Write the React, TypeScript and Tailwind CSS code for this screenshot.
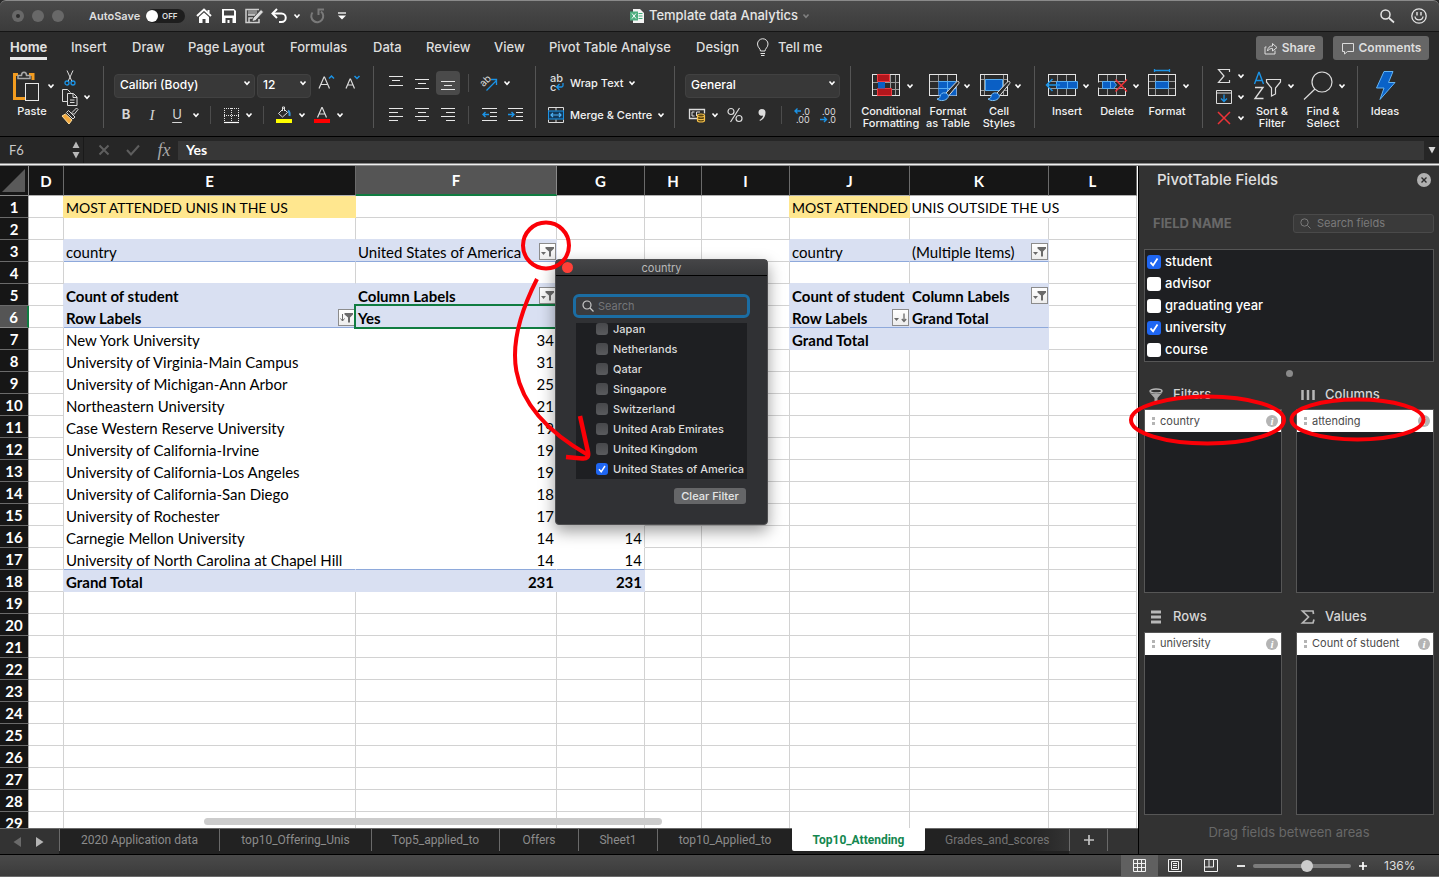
import React, { useState } from "react";

type Kids = { children?: React.ReactNode };

function Svg({ w, h, children }: { w: number; h: number } & Kids) {
  return (
    <svg width={w} height={h} viewBox={`0 0 ${w} ${h}`} fill="none" className="shrink-0 overflow-visible" aria-hidden="true">
      {children}
    </svg>
  );
}

function Chevron({ tone = "#ffffff" }: { tone?: string }) {
  return (
    <Svg w={8} h={8}>
      <path d="M1.5 2.5 4 5.2 6.5 2.5" stroke={tone} strokeWidth="1.6" />
    </Svg>
  );
}

function IconButton({ label, className, children }: { label: string; className: string } & Kids) {
  return (
    <button aria-label={label} className={`flex h-6 shrink-0 items-center justify-center rounded-sm ${className}`}>
      {children}
    </button>
  );
}

function Divider({ className }: { className: string }) {
  return <span className={`h-[18px] w-px shrink-0 bg-[#4c4c4c] ${className}`} />;
}

function Group({ className, children }: { className: string } & Kids) {
  return <div className={`h-[62px] shrink-0 border-r border-[#555555] ${className}`}>{children}</div>;
}

function BigButton({ label, className, chevron = true, children }: { label: string[]; className: string; chevron?: boolean } & Kids) {
  return (
    <button className={`flex shrink-0 flex-col items-center gap-1 ${className}`}>
      <span className={chevron ? "flex h-[30px] items-center gap-[5px] pl-[2px]" : "flex h-[30px] items-center"}>
        {children}
        {chevron && <Chevron />}
      </span>
      <span className="text-center text-[11px] leading-3 font-medium whitespace-nowrap">
        {label.map((l) => (
          <span key={l} className="block">
            {l}
          </span>
        ))}
      </span>
    </button>
  );
}

function RibbonSelect({ label, value, className }: { label: string; value: string; className: string }) {
  return (
    <div className={`relative h-6 shrink-0 ${className}`}>
      <select
        aria-label={label}
        className="h-6 w-full appearance-none rounded-sm border border-[#414141] bg-[#383838] px-[5px] pb-[2px] text-xs font-medium text-white"
      >
        <option>{value}</option>
      </select>
      <span className="pointer-events-none absolute top-2 right-1">
        <Chevron />
      </span>
    </div>
  );
}

function Lines({ rows }: { rows: [number, number, number][] }) {
  return (
    <Svg w={14} h={14}>
      {rows.map(([y, a, b]) => (
        <path key={y} d={`M${a} ${y + 0.5}H${b}`} stroke="#e6e6e6" />
      ))}
    </Svg>
  );
}

function GridBase({ cols, rows, x = 1, y = 5 }: { cols: number[]; rows: number[]; x?: number; y?: number }) {
  return (
    <g>
      {cols.map((c) => (
        <path key={`c${c}`} d={`M${c + 0.5} ${y}V${y + 21}`} stroke="#9a9a9a" />
      ))}
      {rows.map((r) => (
        <path key={`r${r}`} d={`M${x} ${r + 0.5}H${x + 28}`} stroke="#9a9a9a" />
      ))}
      <rect x={x + 0.5} y={y + 0.5} width="27" height="21" stroke="#e4e4e4" />
    </g>
  );
}

function Brush() {
  return (
    <g>
      <path d="M30.500 10.500c.7.500.6 1.300.1 2.200L20.500 25l-3-2.500 10.800-11.400c.8-.8 1.500-1 2.200-.6Z" fill="#2b2b2b" stroke="#e0e0e0" />
      <path d="M17.500 22c-3-.8-5 .8-5.500 3.500-.3 1.600-1.500 2.400-3 2.500 3.500 2.500 9 2 11-1.500.9-1.500.3-3.800-2.500-4.500Z" fill="#0a5fc4" stroke="#7cc0f5" />
    </g>
  );
}

const MENU: [string, string][] = [
  ["Home", "w-[61px]"],
  ["Insert", "w-[61px]"],
  ["Draw", "w-[56px]"],
  ["Page Layout", "w-[102px]"],
  ["Formulas", "w-[83px]"],
  ["Data", "w-[53px]"],
  ["Review", "w-[68px]"],
  ["View", "w-[55px]"],
  ["Pivot Table Analyse", "w-[147px]"],
  ["Design", "w-[60px]"],
];

function TitleBar() {
  return (
    <header className="flex h-8 shrink-0 items-center rounded-t-md border-t border-b border-t-[#8a8a8a] border-b-[#151515] bg-linear-to-b from-[#4a4a4a] to-[#3b3b3b]">
      <div className="flex flex-1 items-center">
        <div className="ml-3 flex gap-2">
          <span className="flex size-3 items-center justify-center rounded-full bg-[#686868]">
            <span className="size-1 rounded-full bg-[#2c2c2c]" />
          </span>
          <span className="size-3 rounded-full bg-[#686868]" />
          <span className="size-3 rounded-full bg-[#686868]" />
        </div>
        <label className="ml-[25px] flex items-center gap-[6px] text-[11px] font-semibold text-[#dedede]">
          <span className="w-[51px] whitespace-nowrap">AutoSave</span>
          <span className="flex h-[14px] w-[39px] items-center gap-1 rounded-full bg-[#1e1e1e]">
            <input type="checkbox" className="size-3 appearance-none rounded-full bg-white" />
            <span className="text-[8px] leading-none">OFF</span>
          </span>
        </label>
        <div className="ml-[11px] flex items-center">
          <IconButton label="Home folder" className="w-4">
            <Svg w={16} h={16}>
              <path d="M1 8 8 1.500 15 8" stroke="#fff" strokeWidth="2" />
              <path d="M3 9 8 4.500 13 9v6H9.500v-4h-3v4H3Z" fill="#fff" />
              <path d="M11.500 2h2v3h-2z" fill="#fff" />
            </Svg>
          </IconButton>
          <IconButton label="Save" className="ml-[9px] w-4">
            <Svg w={16} h={16}>
              <path fillRule="evenodd" d="M1 1h12l2 2v12H1Zm2 1.500v5h10v-5ZM4.500 10v5h2v-3h2v3h3v-5Z" fill="#fff" />
            </Svg>
          </IconButton>
          <IconButton label="Save as" className="ml-2 w-[18px]">
            <Svg w={18} h={16}>
              <path d="M10 14.500H1V1.500h13" stroke="#cfcfcf" strokeWidth="1.500" />
              <path d="M3 2h9v5H3z" fill="#8a8a8a" />
              <path d="M3 7h7M4 14v-4h4" stroke="#cfcfcf" strokeWidth="1.500" />
              <path d="M16 1.500 18.500 4 10.500 12.500l-3.500 1.200 1-3.700Z" fill="#dcdcdc" stroke="#3f3f3f" strokeWidth=".8" />
              <path d="M10 14.500h4V11" stroke="#cfcfcf" strokeWidth="1.500" />
            </Svg>
          </IconButton>
          <IconButton label="Undo" className="ml-2 w-4">
            <Svg w={16} h={16}>
              <path d="M2 5.500h8.500a4 4 0 0 1 0 8.500H8" stroke="#fff" strokeWidth="2" />
              <path d="M6 1 1.500 5.500 6 10" stroke="#fff" strokeWidth="2" />
            </Svg>
          </IconButton>
          <IconButton label="Undo history" className="ml-[6px] w-2">
            <Chevron />
          </IconButton>
          <IconButton label="Redo" className="ml-2 w-4">
            <Svg w={16} h={16}>
              <path d="M3.500 4.500A6 6 0 1 0 12 3.500" stroke="#7a7a7a" strokeWidth="2" />
              <path d="M9.500 7V1.500H15" stroke="#7a7a7a" strokeWidth="2" />
            </Svg>
          </IconButton>
          <IconButton label="Customise toolbar" className="ml-3 w-[10px]">
            <Svg w={8} h={8}>
              <path d="M0 1h8" stroke="#e4e4e4" strokeWidth="1.500" />
              <path d="M0 3.500h8L4 7.500Z" fill="#fff" />
            </Svg>
          </IconButton>
        </div>
      </div>
      <h1 className="ml-3 flex items-center gap-1 text-[13px] font-medium whitespace-nowrap text-[#e6e6e6]">
        <Svg w={16} h={16}>
          <path d="M4 1h7l4 4v10H4Z" fill="#f4f4f4" />
          <path d="M9.500 5.500h4m-4 2.500h4m-4 2.500h4" stroke="#3fae7b" />
          <path d="M1 3.500h8v9H1Z" fill="#4fae80" />
          <path d="m3 5.500 4 5m0-5-4 5" stroke="#fff" />
        </Svg>
        Template data Analytics
        <Chevron tone="#808080" />
      </h1>
      <div className="flex flex-1 items-center justify-end gap-4 pr-3">
        <button aria-label="Search">
          <Svg w={16} h={16}>
            <circle cx="6.500" cy="6.500" r="4.500" stroke="#e4e4e4" strokeWidth="1.500" />
            <path d="m10 10 5 4.500" stroke="#e4e4e4" strokeWidth="1.700" />
          </Svg>
        </button>
        <button aria-label="Feedback">
          <Svg w={16} h={16}>
            <circle cx="8" cy="8" r="7.200" stroke="#e4e4e4" strokeWidth="1.300" />
            <path d="M6 4v3.500M10 4v3.500" stroke="#e4e4e4" strokeWidth="1.400" />
            <path d="M4 8.500c.5 4.500 7.500 4.500 8 0" stroke="#e4e4e4" strokeWidth="1.300" />
          </Svg>
        </button>
      </div>
    </header>
  );
}

function MenuRow() {
  return (
    <nav className="flex h-[34px] shrink-0 items-start pl-[10px] text-[13px] font-medium text-[#dedede]">
      {MENU.map(([t, w], i) => (
        <button key={t} className={`mt-[6px] flex shrink-0 whitespace-nowrap ${w}`}>
          <span className={i === 0 ? "border-b-[3px] border-[#e8e8e8] font-bold leading-[19px]" : "leading-[19px]"}>{t}</span>
        </button>
      ))}
      <button className="mt-[6px] flex h-5 items-center gap-2 whitespace-nowrap">
        <Svg w={14} h={20}>
          <path d="M4.500 13c0-2.500-3-3.500-3-7a5 5 0 0 1 10.500 0c0 3.500-3 4.500-3 7ZM4.500 15.500h4.500M5 17.500h3.500" stroke="#e4e4e4" />
        </Svg>
        Tell me
      </button>
      <div className="mr-[10px] ml-auto flex gap-[10px] pt-1">
        <button className="flex h-6 w-[67px] items-center justify-center gap-1 rounded-[3px] bg-[#666666] text-xs font-semibold">
          <Svg w={14} h={14}>
            <path d="M2.500 6H1v7h10V9.500M3.500 10c.3-3.500 2-5 5-5V2.500L13 6.500 8.500 10V7.500c-2 0-3.500.5-5 2.500Z" stroke="#dcdcdc" />
          </Svg>
          Share
        </button>
        <button className="flex h-6 w-24 items-center justify-center gap-1 rounded-[3px] bg-[#666666] text-xs font-semibold">
          <Svg w={14} h={14}>
            <path d="M1.500 2.500h11v8h-6l-3 2.500v-2.500h-2Z" stroke="#dcdcdc" />
          </Svg>
          Comments
        </button>
      </div>
    </nav>
  );
}

function Ribbon() {
  return (
    <div className="flex h-[71px] shrink-0 items-start border-b border-black text-[#f2f2f2]">
      <Group className="flex w-[104px]">
        <BigButton label={["Paste"]} className="ml-[5px] w-[54px] pt-[5px]">
          <Svg w={30} h={30}>
            <path d="M6 3.500H2.500v24h11M21 9V3.500h-4" stroke="#f39c1f" strokeWidth="3" />
            <path d="M6 7.500v-3h3.500c0-4.500 5-4.500 5 0H18v3Z" fill="#2b2b2b" stroke="#a8a8a8" strokeWidth="1.500" />
            <rect x="13.500" y="12.500" width="13" height="17" fill="#2b2b2b" stroke="#e8e8e8" />
          </Svg>
        </BigButton>
        <div className="ml-[2px] flex flex-col">
          <IconButton label="Cut" className="w-[18px]">
            <Svg w={12} h={18}>
              <path d="M3 1.500 8 12.500M9 1.500 4 12.500" stroke="#dcdcdc" />
              <circle cx="3" cy="14" r="2" stroke="#1b93e6" strokeWidth="1.300" />
              <circle cx="9" cy="14" r="2" stroke="#1b93e6" strokeWidth="1.300" />
            </Svg>
          </IconButton>
          <button aria-label="Copy" className="-mt-1 flex h-6 items-center gap-[5px]">
            <Svg w={17} h={17}>
              <path d="M6.500 12.500h-5v-12h5l3 3" stroke="#dcdcdc" />
              <path d="M6.500 4.500h6l3.500 3.500v8.500h-9.500ZM12 5v3.500h4M9 11h4.500M9 13.500h4.500" stroke="#dcdcdc" />
            </Svg>
            <Chevron />
          </button>
          <IconButton label="Format painter" className="-mt-1 w-[18px]">
            <Svg w={18} h={18}>
              <path d="m15.500 1 1.500 1.500-4 5L11 5.500Z" stroke="#dcdcdc" />
              <path d="m7.500 3.500 6.500 6.500-2 2L5.500 5.500Z" stroke="#dcdcdc" />
              <path d="m4.500 7 6.500 6-3 4L1 9Z" fill="#f3a83b" stroke="#ffe0a0" />
            </Svg>
          </IconButton>
        </div>
      </Group>

      <Group className="flex w-[270px] flex-col gap-2 pt-[5px] pl-[10px]">
        <div className="flex">
          <RibbonSelect label="Font" value="Calibri (Body)" className="w-[141px]" />
          <RibbonSelect label="Font size" value="12" className="ml-[2px] w-[54px]" />
          <IconButton label="Increase font size" className="ml-[6px] w-[18px]">
            <Svg w={17} h={16}>
              <path d="M1 13.500 6 2h.5l5 11.500M3 9.500h6.500" stroke="#dcdcdc" strokeWidth="1.200" />
              <path d="m11 3.500 2.500-2.500L16 3.500" stroke="#1b93e6" strokeWidth="1.500" />
            </Svg>
          </IconButton>
          <IconButton label="Decrease font size" className="ml-2 w-[18px]">
            <Svg w={17} h={16}>
              <path d="M2 13.500 6 4h.5l4 9.500M3.500 10h5.500" stroke="#dcdcdc" strokeWidth="1.200" />
              <path d="m10.500 1 2.500 2.500L15.500 1" stroke="#1b93e6" strokeWidth="1.500" />
            </Svg>
          </IconButton>
        </div>
        <div className="flex items-center">
          <button className="w-6 text-[13px] font-bold text-[#d6d6d6]">B</button>
          <button className="ml-[2px] w-6 font-['Liberation_Serif',serif] text-[15px] text-[#d6d6d6] italic">I</button>
          <button className="ml-[1px] w-6 text-[13px] underline underline-offset-3 text-[#d6d6d6]">U</button>
          <IconButton label="Underline style" className="ml-[3px] w-2"><Chevron /></IconButton>
          <Divider className="ml-[10px]" />
          <IconButton label="Borders" className="ml-3 w-4">
            <Svg w={15} h={15}>
              <path d="M.5 0v13M7.500 0v13M14.500 0v13M0 .5h15M0 7.500h15" stroke="#e4e4e4" strokeDasharray="1 1" />
              <path d="M0 14.500h15" stroke="#fff" strokeWidth="1.200" />
            </Svg>
          </IconButton>
          <IconButton label="Border style" className="ml-[6px] w-2"><Chevron /></IconButton>
          <Divider className="ml-[10px]" />
          <IconButton label="Fill colour" className="ml-3 w-4">
            <Svg w={16} h={18}>
              <path d="m7.500 2.500 4 4-5 4.500-4-3.500ZM6.500 5V1h2v4" stroke="#dcdcdc" />
              <path d="M12 4.500c1.500 1 2 2.500 1.500 5.500" stroke="#3a95d6" strokeWidth="2" />
              <path d="M0 13h16v4H0z" fill="#ffff00" />
            </Svg>
          </IconButton>
          <IconButton label="Fill colour menu" className="ml-[6px] w-2"><Chevron /></IconButton>
          <IconButton label="Font colour" className="ml-2 w-4">
            <Svg w={16} h={18}>
              <path d="M3.500 11.500 7.800 1.500h.4l4.300 10M5 8h6" stroke="#dcdcdc" strokeWidth="1.200" />
              <path d="M0 13h16v4H0z" fill="#ff0000" />
            </Svg>
          </IconButton>
          <IconButton label="Font colour menu" className="ml-[6px] w-2"><Chevron /></IconButton>
        </div>
      </Group>

      <Group className="flex w-[162px] flex-col gap-2 pt-[5px] pl-[10px]">
        <div className="flex items-center">
          <IconButton label="Align top" className="w-6"><Lines rows={[[0, 0, 14], [4, 3, 11], [9, 0, 14]]} /></IconButton>
          <IconButton label="Align middle" className="ml-[2px] w-6"><Lines rows={[[3, 0, 14], [7, 3, 11], [12, 0, 14]]} /></IconButton>
          <IconButton label="Align bottom" className="ml-[2px] w-6 bg-[#4a4a4a]"><Lines rows={[[5, 0, 14], [9, 3, 11], [13, 0, 14]]} /></IconButton>
          <Divider className="ml-2" />
          <IconButton label="Orientation" className="ml-3 w-4">
            <Svg w={17} h={17}>
              <g transform="rotate(-45 6 6)">
                <text x="-1" y="8" fontSize="10" fill="#d6d6d6">ab</text>
              </g>
              <path d="m5.500 15.500 10-10M10 4.500h5.500V10" stroke="#1b93e6" strokeWidth="1.300" />
            </Svg>
          </IconButton>
          <IconButton label="Orientation menu" className="ml-[6px] w-2"><Chevron /></IconButton>
        </div>
        <div className="flex items-center">
          <IconButton label="Align left" className="w-6"><Lines rows={[[0, 0, 14], [4, 0, 9], [8, 0, 14], [12, 0, 9]]} /></IconButton>
          <IconButton label="Align centre" className="ml-[2px] w-6"><Lines rows={[[0, 0, 14], [4, 3, 11], [8, 0, 14], [12, 3, 11]]} /></IconButton>
          <IconButton label="Align right" className="ml-[2px] w-6"><Lines rows={[[0, 0, 14], [4, 5, 14], [8, 0, 14], [12, 5, 14]]} /></IconButton>
          <Divider className="ml-2" />
          <IconButton label="Decrease indent" className="ml-3 w-4">
            <Svg w={15} h={14}>
              <path d="M0 .5h15M8 4.500h7M8 8.500h7M0 12.500h15" stroke="#e6e6e6" />
              <path d="M7 6.500H1.500M3.500 4 1 6.500 3.500 9" stroke="#1b93e6" strokeWidth="1.400" />
            </Svg>
          </IconButton>
          <IconButton label="Increase indent" className="ml-[10px] w-4">
            <Svg w={15} h={14}>
              <path d="M0 .5h15M8 4.500h7M8 8.500h7M0 12.500h15" stroke="#e6e6e6" />
              <path d="M0 6.500h5.500M3.500 4 6 6.500 3.500 9" stroke="#1b93e6" strokeWidth="1.400" />
            </Svg>
          </IconButton>
        </div>
      </Group>

      <Group className="flex w-[139px] flex-col gap-2 pt-[5px] pl-3">
        <button className="flex h-6 items-center gap-[5px] text-[11px] font-medium whitespace-nowrap">
          <Svg w={17} h={18}>
            <text x="2" y="8" fontSize="11" fill="#dcdcdc">ab</text>
            <text x="2" y="17" fontSize="11" fill="#dcdcdc">c</text>
            <path d="M15 9v2.500c0 1-.5 1.500-1.500 1.500H9M11.500 10l-3 3 3 3" stroke="#1b93e6" strokeWidth="1.300" />
          </Svg>
          Wrap Text
          <Chevron />
        </button>
        <button className="flex h-6 items-center gap-[5px] text-[11px] font-medium whitespace-nowrap">
          <Svg w={17} h={17}>
            <path d="M.5 3.500v-3h15v3M.5 12.500v3h15v-3M8 .5v3M8 12.500v3" stroke="#dcdcdc" />
            <rect x=".5" y="4" width="15" height="8" stroke="#1b93e6" fill="#12395a" />
            <path d="M3 8h10M5 6 3 8l2 2M11 6l2 2-2 2" stroke="#4fb2f5" strokeWidth="1.200" />
          </Svg>
          Merge &amp; Centre
          <Chevron />
        </button>
      </Group>

      <Group className="flex w-[176px] flex-col gap-2 pt-[5px] pl-[10px]">
        <RibbonSelect label="Number format" value="General" className="w-[155px]" />
        <div className="flex items-center">
          <IconButton label="Accounting format" className="ml-1 w-4">
            <Svg w={17} h={16}>
              <path d="M8 11.500H.5v-9h15v4" stroke="#dcdcdc" strokeWidth="1.300" />
              <path d="M5.500 5H3v4h2.500M7.500 9V5H11" stroke="#dcdcdc" />
              <path d="M8.500 8.500c0-2 7-2 7 0v5c0 2-7 2-7 0Z" fill="#5a4410" stroke="#f5c04a" strokeWidth="1.200" />
              <path d="M8.500 8.800c0 1.500 7 1.500 7 0M8.500 11.500c0 1.500 7 1.500 7 0" stroke="#f5c04a" strokeWidth="1.100" />
            </Svg>
          </IconButton>
          <IconButton label="Accounting menu" className="ml-[6px] w-2"><Chevron /></IconButton>
          <IconButton label="Percent style" className="ml-2 w-4">
            <Svg w={16} h={16}>
              <circle cx="4" cy="4.500" r="3" stroke="#dcdcdc" strokeWidth="1.200" />
              <circle cx="12" cy="11.500" r="3" stroke="#dcdcdc" strokeWidth="1.200" />
              <path d="M12.500 1 3.500 15" stroke="#dcdcdc" strokeWidth="1.200" />
            </Svg>
          </IconButton>
          <IconButton label="Comma style" className="ml-[11px] w-4">
            <Svg w={10} h={14}>
              <path d="M5 1a3.500 3.500 0 0 1 3.500 3.500c0 4-2 7-5.500 8.500l-.5-1C5 10.500 6 9 6 7.500 3 8.500 1.500 6.500 1.500 4.500A3.500 3.500 0 0 1 5 1Z" fill="#dcdcdc" />
            </Svg>
          </IconButton>
          <Divider className="ml-[11px]" />
          <IconButton label="Increase decimal" className="ml-3 w-4">
            <Svg w={17} h={17}>
              <path d="M7 4H1M3.500 1.500 1 4l2.500 2.500" stroke="#1b93e6" strokeWidth="1.400" />
              <text x="8" y="8" fontSize="9" fill="#dcdcdc">.0</text>
              <text x="2" y="16" fontSize="9" fill="#dcdcdc">.00</text>
            </Svg>
          </IconButton>
          <IconButton label="Decrease decimal" className="ml-[10px] w-4">
            <Svg w={17} h={17}>
              <text x="2" y="8" fontSize="9" fill="#dcdcdc">.00</text>
              <path d="M0 12.500h6.500M4 10l2.500 2.500L4 15" stroke="#1b93e6" strokeWidth="1.400" />
              <text x="8" y="16" fontSize="9" fill="#dcdcdc">.0</text>
            </Svg>
          </IconButton>
        </div>
      </Group>

      <Group className="flex w-[184px] pt-[5px] pl-3">
        <BigButton label={["Conditional", "Formatting"]} className="w-14">
          <Svg w={30} h={30}>
            <GridBase cols={[7, 19, 24]} rows={[11, 18]} y={3} />
            <path d="M6.500 3.500h12v7h-12zM6.500 17.500h14v7h-14z" fill="#b3161c" stroke="#ef3a3f" />
            <path d="M7 11h7v6.500H7z" fill="#0a5fc4" />
          </Svg>
        </BigButton>
        <BigButton label={["Format", "as Table"]} className="w-[58px]">
          <Svg w={30} h={30}>
            <GridBase cols={[10, 19]} rows={[10, 17]} y={3} />
            <path d="M10.500 10.500h18v14h-18z" fill="#0a5fc4" />
            <path d="M10 10.500h18.500M19.500 11v13M10 17.500h18" stroke="#55abf0" />
            <Brush />
          </Svg>
        </BigButton>
        <BigButton label={["Cell", "Styles"]} className="w-[44px]">
          <Svg w={30} h={30}>
            <GridBase cols={[5, 24]} rows={[8, 19]} y={3} />
            <path d="M6.500 8.500h17v11h-17z" fill="#0a5fc4" stroke="#55abf0" />
            <Brush />
          </Svg>
        </BigButton>
      </Group>

      <Group className="flex w-[168px] pt-[5px] pl-[7px]">
        <BigButton label={["Insert"]} className="w-[50px]">
          <Svg w={30} h={30}>
            <GridBase cols={[10, 19]} rows={[10, 17]} y={3} />
            <path d="M9.500 10.500h21v7h-21z" fill="#0a5fc4" stroke="#55abf0" />
            <path d="M20.500 11v6" stroke="#55abf0" />
            <path d="M13 14H-.5M5.500 8l-6 6 6 6" stroke="#1b93e6" strokeWidth="1.500" />
          </Svg>
        </BigButton>
        <BigButton label={["Delete"]} className="w-[50px]">
          <Svg w={30} h={30}>
            <GridBase cols={[10, 19]} rows={[10, 17]} y={3} />
            <path d="M0 11.500h5v5H0zM19 11h11v6H19z" fill="#2b2b2b" />
            <path d="M5.500 10.500h11l3 3.500-3 3.500h-11z" fill="#0a5fc4" stroke="#55abf0" />
            <path d="M13.500 11v6" stroke="#55abf0" />
            <path d="m18.500 8.500 11.500 12m0-12-11.500 12" stroke="#ee3338" strokeWidth="1.500" />
          </Svg>
        </BigButton>
        <BigButton label={["Format"]} className="w-[50px]">
          <Svg w={30} h={30}>
            <GridBase cols={[8, 21]} rows={[10, 17]} y={3} />
            <path d="M8.500 10.500h13v7h-13z" fill="#0a5fc4" stroke="#55abf0" />
            <path d="M7.500-.5h15M7.500-2v3M22.500-2v3" stroke="#1b93e6" strokeWidth="1.300" />
          </Svg>
        </BigButton>
      </Group>

      <Group className="flex w-[155px]">
        <div className="flex w-[43px] flex-col pl-[13px]">
          <button aria-label="AutoSum" className="flex h-[22px] items-center gap-[5px]">
            <Svg w={16} h={16}>
              <path d="M13.500 4V1.500h-11l5.500 6.500-5.500 6.500h11V12" stroke="#dcdcdc" strokeWidth="1.200" />
            </Svg>
            <Chevron />
          </button>
          <button aria-label="Fill" className="flex h-[22px] items-center gap-[5px]">
            <Svg w={16} h={16}>
              <path d="M.5 1.500h15v13H.5zM.5 4h15" stroke="#dcdcdc" />
              <path d="M8 5.500v7M5 9.500l3 3 3-3" stroke="#1b93e6" strokeWidth="1.300" />
            </Svg>
            <Chevron />
          </button>
          <button aria-label="Clear" className="flex h-[22px] items-center gap-[5px]">
            <Svg w={16} h={16}>
              <path d="m2 2 12 12m0-12-12 12" stroke="#ee3338" strokeWidth="1.500" />
            </Svg>
            <Chevron />
          </button>
        </div>
        <BigButton label={["Sort &", "Filter"]} className="w-[52px] pt-[5px]">
          <Svg w={30} h={30}>
            <path d="M2.500 13 6.800 1.500h.4L11.500 13M4 9.500h6" stroke="#1b93e6" strokeWidth="1.400" />
            <path d="M3 16.500h8L3 27.500h8.500" stroke="#dcdcdc" strokeWidth="1.400" />
            <path d="M14.500 8.500h14v2.500L23.500 17v6l-4 2v-8l-5-6Z" stroke="#dcdcdc" strokeWidth="1.200" />
          </Svg>
        </BigButton>
        <BigButton label={["Find &", "Select"]} className="w-[50px] pt-[5px]">
          <Svg w={30} h={30}>
            <circle cx="19" cy="11" r="10" stroke="#dcdcdc" strokeWidth="1.200" />
            <path d="M12 18 1 28.500" stroke="#dcdcdc" strokeWidth="1.200" />
          </Svg>
        </BigButton>
      </Group>

      <div className="pt-[5px]">
        <BigButton label={["Ideas"]} className="w-[54px]" chevron={false}>
          <Svg w={24} h={30}>
            <path d="M11 .5h9L15.500 11.500H22L7 28.500l4-11.500H3.500Z" fill="#0a62c8" stroke="#63b4f5" />
          </Svg>
        </BigButton>
      </div>
    </div>
  );
}

function FormulaBar() {
  return (
    <div className="flex h-[26px] shrink-0 items-center bg-[#262626] text-xs">
      <input
        aria-label="Name box"
        defaultValue="F6"
        className="w-[68px] bg-transparent pt-[2px] pl-[9px] text-[13px] text-[#c8c8c8] outline-none font-['Lato',sans-serif]"
      />
      <button aria-label="Name list" className="flex w-[15px] justify-center">
        <Svg w={8} h={20}>
          <path d="M4 1.500 7.500 8h-7ZM4 18.500.5 12h7Z" fill="#b8b8b8" />
        </Svg>
      </button>
      <span className="h-full w-px bg-[#1a1a1a]" />
      <button aria-label="Cancel" className="ml-[14px]">
        <Svg w={12} h={12}>
          <path d="m1.500 1.500 9 9m0-9-9 9" stroke="#5e5e5e" strokeWidth="2" />
        </Svg>
      </button>
      <button aria-label="Enter" className="ml-4">
        <Svg w={14} h={12}>
          <path d="m1 6 4 4.500 8-9" stroke="#5e5e5e" strokeWidth="2" />
        </Svg>
      </button>
      <button className="ml-[14px] w-5 font-['Liberation_Serif',serif] text-lg leading-5 text-[#a8a8a8] italic">fx</button>
      <input
        aria-label="Formula"
        defaultValue="Yes"
        className="ml-1 h-[19px] min-w-0 flex-1 bg-[#373737] pl-2 font-['Lato',sans-serif] text-sm font-bold text-white outline-none"
      />
      <button aria-label="Expand formula bar" className="flex w-[15px] justify-center">
        <Svg w={8} h={8}>
          <path d="M.5 1h7L4 7.500Z" fill="#d4d4d4" />
        </Svg>
      </button>
    </div>
  );
}

const COLS = ["D", "E", "F", "G", "H", "I", "J", "K", "L"];
const COL_WIDTHS = ["w-[35px]", "w-[292px]", "w-[201px]", "w-[88px]", "w-[57px]", "w-[88px]", "w-[120px]", "w-[139px]", "w-[88px]"];

type FilterKind = "filter" | "sortfilter" | "sort";
type Cell = { t: string; bold?: boolean; right?: boolean; title?: boolean; filter?: FilterKind };

const UNIS: [string, string, string?][] = [
  ["New York University", "34"],
  ["University of Virginia-Main Campus", "31"],
  ["University of Michigan-Ann Arbor", "25"],
  ["Northeastern University", "21"],
  ["Case Western Reserve University", "19"],
  ["University of California-Irvine", "19"],
  ["University of California-Los Angeles", "19"],
  ["University of California-San Diego", "18"],
  ["University of Rochester", "17"],
  ["Carnegie Mellon University", "14", "14"],
  ["University of North Carolina at Chapel Hill", "14", "14"],
];

const CELLS: Record<string, Cell> = {
  E1: { t: "MOST ATTENDED UNIS IN THE US", title: true },
  J1: { t: "MOST ATTENDED UNIS OUTSIDE THE US", title: true },
  E3: { t: "country" },
  F3: { t: "United States of America", filter: "filter" },
  J3: { t: "country" },
  K3: { t: "(Multiple Items)", filter: "filter" },
  E5: { t: "Count of student", bold: true },
  F5: { t: "Column Labels", bold: true, filter: "filter" },
  J5: { t: "Count of student", bold: true },
  K5: { t: "Column Labels", bold: true, filter: "filter" },
  E6: { t: "Row Labels", bold: true, filter: "sortfilter" },
  F6: { t: "Yes", bold: true },
  J6: { t: "Row Labels", bold: true, filter: "sort" },
  K6: { t: "Grand Total", bold: true },
  J7: { t: "Grand Total", bold: true },
  E18: { t: "Grand Total", bold: true },
  F18: { t: "231", bold: true, right: true },
  G18: { t: "231", bold: true, right: true },
};
UNIS.forEach(([name, n, total], i) => {
  CELLS[`E${i + 7}`] = { t: name };
  CELLS[`F${i + 7}`] = { t: n, right: true };
  if (total) CELLS[`G${i + 7}`] = { t: total, right: true };
});

type Fill = "yellow" | "blue" | "pivot" | "none";
function fillOf(col: string | undefined, row: number): Fill {
  if (!col) return "none";
  if (row === 1 && (col === "E" || col === "J")) return "yellow";
  if (row === 3 && "EFJK".includes(col)) return "blue";
  if ((row === 5 || row === 6) && "EFGJK".includes(col)) return "blue";
  if (row === 7 && "JK".includes(col)) return "blue";
  if (row === 18 && "EFG".includes(col)) return "blue";
  if (row > 6 && row < 18 && "EFG".includes(col)) return "pivot";
  return "none";
}

const BG: Record<Fill, string> = { yellow: "bg-[#ffe78f]", blue: "bg-[#d9e0f2]", pivot: "bg-white", none: "" };
const RIGHT: Record<Fill, string> = {
  yellow: "border-r-[#ffe78f]",
  blue: "border-r-[#d9e0f2]",
  pivot: "border-r-white",
  none: "border-r-[#d2d2d2]",
};
const BOTTOM: Record<Fill, string> = {
  yellow: "border-b-[#ffe78f]",
  blue: "border-b-[#d9e0f2]",
  pivot: "border-b-white",
  none: "border-b-[#d2d2d2]",
};

function rightClass(i: number, row: number) {
  const col = COLS[i];
  const own = fillOf(col, row);
  const next = fillOf(COLS[i + 1], row);
  if (row === 1 && col === "K") return "border-r-transparent";
  if (own === "pivot" && col === "G") return RIGHT.none;
  if (own !== "none") return RIGHT[own];
  return next === "pivot" ? RIGHT.none : RIGHT[next];
}

function bottomClass(col: string, row: number) {
  const own = fillOf(col, row);
  const below = fillOf(col, row + 1);
  if ((row === 3 || row === 6) && own === "blue") return "border-b-[#8ea9db]";
  if (row === 17 && own === "pivot") return "border-b-[#8ea9db]";
  if (own !== "none") return BOTTOM[own];
  return BOTTOM[below];
}

function FilterButton({ kind, label }: { kind: FilterKind; label: string }) {
  return (
    <button
      aria-label={label}
      className="flex size-[17px] shrink-0 items-center justify-center border border-[#8c8c8c] bg-linear-to-b from-white to-[#ededed]"
    >
      <Svg w={15} h={15}>
        {kind === "filter" && <path d="M1 8h5L3.500 11Z" fill="#6a6a6a" />}
        {kind === "sortfilter" && <path d="M3.500 4v7M1.500 8.500l2 2.500 2-2.500" stroke="#6a6a6a" />}
        {kind !== "sort" && <path d="M5.500 3h8.500v1.500L11 7.500V12.500H9V7.500L5.500 4.500Z" fill="#6a6a6a" />}
        {kind === "sort" && (
          <>
            <path d="M1 8h5L3.500 11Z" fill="#6a6a6a" />
            <path d="M11 3.500v8M8.800 9l2.200 2.500L13.200 9" stroke="#6a6a6a" strokeWidth="1.300" />
          </>
        )}
      </Svg>
    </button>
  );
}

function Sheet() {
  const rows = Array.from({ length: 29 }, (_, i) => i + 1);
  return (
    <div className="relative min-h-0 flex-1 overflow-hidden bg-white">
      <table className="w-[1137px] table-fixed border-separate border-spacing-0 font-['Lato',sans-serif] text-[15px] leading-5 text-black">
        <colgroup>
          <col className="w-[29px]" />
          {COL_WIDTHS.map((w, i) => (
            <col key={COLS[i]} className={w} />
          ))}
        </colgroup>
        <thead>
          <tr className="h-[30px] bg-[#161616] text-white">
            <th className="border-r border-b border-[#8a8a8a] p-0" aria-label="Select all">
              <span className="flex justify-end pr-[2px]">
                <Svg w={24} h={24}>
                  <path d="M23 0v23H0Z" fill="#5a5a5a" />
                </Svg>
              </span>
            </th>
            {COLS.map((c) => (
              <th
                key={c}
                scope="col"
                className={
                  c === "F"
                    ? "border-r border-b-2 border-r-[#8a8a8a] border-b-[#107c41] bg-[#555555] p-0 font-bold"
                    : "border-r border-b border-r-[#6a6a6a] border-b-[#b0b0b0] p-0 font-bold"
                }
              >
                {c}
              </th>
            ))}
          </tr>
        </thead>
        <tbody>
          {rows.map((r) => (
            <tr key={r} className="h-[22px]">
              <th
                scope="row"
                className={
                  r === 6
                    ? "border-r-2 border-b border-r-[#107c41] border-b-[#8a8a8a] bg-[#555555] p-0 leading-5 font-bold text-white"
                    : "border-r border-b border-r-[#b0b0b0] border-b-[#6a6a6a] bg-[#161616] p-0 leading-5 font-bold text-white"
                }
              >
                {r}
              </th>
              {COLS.map((c, i) => {
                const cell = CELLS[`${c}${r}`];
                return (
                  <td
                    key={c}
                    className={`relative border-r border-b p-0 whitespace-nowrap ${BG[fillOf(c, r)]} ${rightClass(i, r)} ${bottomClass(c, r)}`}
                  >
                    {cell && (
                      <div
                        className={`flex h-[21px] items-center pt-[2px] pl-[2px] ${cell.right ? "justify-end pr-[2px]" : "justify-between"} ${cell.bold ? "font-bold" : ""} ${cell.title ? "text-sm" : ""}`}
                      >
                        <span>{cell.t}</span>
                        {cell.filter && <FilterButton kind={cell.filter} label={`Filter ${cell.t}`} />}
                      </div>
                    )}
                    {c === "F" && r === 6 && (
                      <span className="pointer-events-none absolute -inset-[2px] z-10 border-2 border-[#107c41]" />
                    )}
                  </td>
                );
              })}
            </tr>
          ))}
        </tbody>
      </table>
      <div className="absolute bottom-[3px] left-[204px] h-[7px] w-[458px] rounded-full bg-[#cccccc]" />
      <CountryFilter />
    </div>
  );
}

function Check({ label, checked, size, off, text }: { label: string; checked: boolean; size: string; off: string; text: string }) {
  const [on, setOn] = useState(checked);
  return (
    <label className={`flex items-center whitespace-nowrap ${text}`}>
      <span className={`relative shrink-0 ${size}`}>
        <input
          type="checkbox"
          checked={on}
          onChange={() => setOn(!on)}
          className={`block appearance-none rounded-[3px] ${size} ${on ? "bg-[#1f66f2]" : off}`}
        />
        {on && (
          <svg viewBox="0 0 12 12" className="pointer-events-none absolute inset-0" fill="none" aria-hidden="true">
            <path d="m3 6.300 2.200 2.500L9 3" stroke="#fff" strokeWidth="1.500" />
          </svg>
        )}
      </span>
      {label}
    </label>
  );
}

function CountryFilter() {
  const names = ["Japan", "Netherlands", "Qatar", "Singapore", "Switzerland", "United Arab Emirates", "United Kingdom", "United States of America"];
  return (
    <section
      aria-label="country"
      className="absolute top-[93px] left-[555px] z-20 w-[213px] rounded-[4px] border border-[#4e4e50] bg-[#303134] shadow-[0_6px_16px_rgba(0,0,0,0.4)]"
    >
      <div className="flex h-4 items-center border-b border-black bg-linear-to-b from-[#454547] to-[#38393b]">
        <button aria-label="Close" className="ml-[6px] size-[11px] rounded-full bg-[#ff4038]" />
        <h2 className="flex-1 pr-[17px] text-center text-[11px] leading-4 text-[#b8b8b8]">country</h2>
      </div>
      <div className="flex flex-col px-5 pt-[21px] pb-5">
        <label className="mb-[8px] flex h-[18px] items-center gap-1 rounded-[3px] bg-[#3a3b3e] pl-[6px] outline-[3px] outline-[#1b6da3]">
          <Svg w={12} h={12}>
            <circle cx="5" cy="5" r="4" stroke="#c8c8c8" strokeWidth="1.200" />
            <path d="m8 8 3.500 3.500" stroke="#c8c8c8" strokeWidth="1.200" />
          </Svg>
          <input aria-label="Search" placeholder="Search" className="w-full bg-transparent text-[11px] text-white outline-none placeholder:text-[#747679]" />
        </label>
        <div className="h-[156px] overflow-hidden bg-[#1e1f22] pl-5">
          <div className="-mt-[4px]">
            {names.map((n) => (
              <Check
                key={n}
                label={n}
                checked={n === "United States of America"}
                size="size-3"
                off="bg-linear-to-b from-[#47484b] to-[#5a5b5e]"
                text="h-5 gap-[5px] text-[11px] font-medium text-[#dcdcdc]"
              />
            ))}
          </div>
        </div>
        <button className="mt-[9px] mr-px h-4 w-[72px] self-end rounded-[3px] bg-[#656668] text-[11px] leading-4 font-medium text-[#e6e6e6]">
          Clear Filter
        </button>
      </div>
    </section>
  );
}

const SHEETS: [string, string][] = [
  ["2020 Application data", "w-40"],
  ["top10_Offering_Unis", "w-[152px]"],
  ["Top5_applied_to", "w-32"],
  ["Offers", "w-[79px]"],
  ["Sheet1", "w-[79px]"],
  ["top10_Applied_to", "w-[135px]"],
  ["Top10_Attending", "w-[133px]"],
];

function SheetTabs() {
  return (
    <div className="flex h-[26px] shrink-0 border-t border-[#6a6a6a] bg-[#222222] font-['Roboto',sans-serif] text-xs text-[#8c8c8c]">
      <div className="flex w-[59px] items-center gap-[15px] bg-[#333333] pl-[13px]">
        <button aria-label="Previous sheet">
          <Svg w={8} h={12}><path d="M8 1v10L.5 6Z" fill="#6a6a6a" /></Svg>
        </button>
        <button aria-label="Next sheet">
          <Svg w={8} h={12}><path d="M0 1v10l7.500-5Z" fill="#b4b4b4" /></Svg>
        </button>
      </div>
      {SHEETS.map(([t, w]) => (
        <button
          key={t}
          className={
            t === "Top10_Attending"
              ? `-mt-px h-[23px] shrink-0 rounded-b-[2px] bg-white font-bold text-[#14874f] ${w}`
              : `h-[22px] shrink-0 border-l border-[#6a6a6a] ${w}`
          }
        >
          {t}
        </button>
      ))}
      <button className="h-[22px] w-36 overflow-hidden bg-linear-to-r from-[#222222] from-70% to-[#333333] pl-5 text-left whitespace-nowrap text-[#747474]">
        Grades_and_scores
      </button>
      <div className="flex flex-1 bg-[#333333]">
        <button aria-label="New sheet" className="flex h-[22px] w-[39px] items-center justify-center border-x border-[#6a6a6a]">
          <Svg w={10} h={10}><path d="M5 0v10M0 5h10" stroke="#c4c4c4" strokeWidth="1.700" /></Svg>
        </button>
      </div>
    </div>
  );
}

function Area({ title, field, icon }: { title: string; field: string; icon: React.ReactNode }) {
  return (
    <section className="flex min-h-0 flex-col">
      <h3 className="flex h-[29px] shrink-0 items-center gap-[9px] pl-1 text-[13px] font-medium text-[#d6d6d6]">
        {icon}
        {title}
      </h3>
      <div className="min-h-0 flex-1 border border-[#565656] bg-[#1e1f22]">
        <div className="flex h-[22px] items-center bg-white px-[3px] text-[11px] text-[#4a4a4a]">
          <Svg w={12} h={10}>
            <path d="M4 1h3v3H4zM4 6h3v3H4z" fill="#b4b4b4" />
          </Svg>
          <span className="flex-1 whitespace-nowrap">{field}</span>
          <button
            aria-label={`About ${field}`}
            className="size-3 rounded-full bg-[#b4b4b4] font-['Liberation_Serif',serif] text-[11px] leading-3 font-bold text-white italic"
          >
            i
          </button>
        </div>
      </div>
    </section>
  );
}

function FieldsPanel() {
  const fields: [string, boolean][] = [["student", true], ["advisor", false], ["graduating year", false], ["university", true], ["course", false]];
  return (
    <aside className="flex w-[301px] shrink-0 flex-col border-l border-black bg-[#323232] pr-[5px] pl-[5px]">
      <div className="flex h-[28px] items-center justify-between pr-[3px] pl-[13px]">
        <h2 className="text-[15px] font-medium text-[#e0e0e0]">PivotTable Fields</h2>
        <button aria-label="Close panel">
          <Svg w={14} h={14}>
            <circle cx="7" cy="7" r="7" fill="#b0b0b0" />
            <path d="m4.500 4.500 5 5m0-5-5 5" stroke="#2c2c2c" strokeWidth="1.400" />
          </Svg>
        </button>
      </div>
      <div className="mt-[20px] flex h-[19px] items-center justify-between pl-[9px]">
        <h3 className="text-[13px] font-bold text-[#686868]">FIELD NAME</h3>
        <label className="flex h-[19px] w-[141px] items-center gap-[6px] rounded-[3px] border border-[#4a4a4a] bg-[#3a3a3a] pl-[6px]">
          <Svg w={11} h={11}>
            <circle cx="4.500" cy="4.500" r="3.700" stroke="#7a7a7a" />
            <path d="m7.500 7.500 3 3" stroke="#7a7a7a" />
          </Svg>
          <input aria-label="Search fields" placeholder="Search fields" className="w-full bg-transparent text-[11px] text-white outline-none placeholder:text-[#7a7a7a]" />
        </label>
      </div>
      <div className="mt-4 shrink-0 border border-[#565656] bg-[#1e1f22] pt-px pl-[2px]">
        {fields.map(([f, on]) => (
          <Check key={f} label={f} checked={on} size="size-[14px]" off="bg-white" text="h-[22px] gap-1 text-[13px] font-medium text-white" />
        ))}
      </div>
      <div className="flex h-[18px] shrink-0 items-end justify-center">
        <span className="mb-[3px] size-[7px] rounded-full bg-[#8a8a8a]" />
      </div>
      <div className="grid min-h-0 flex-1 grid-cols-2 grid-rows-2 gap-x-[14px] gap-y-[10px]">
        <Area
          title="Filters"
          field="country"
          icon={<Svg w={16} h={14}><ellipse cx="8" cy="3" rx="6" ry="2" stroke="#b8b8b8" strokeWidth="1.400" /><path d="M1.500 4.500 6.500 10v4h3v-4l5-5.500C12 6.500 4 6.500 1.500 4.500Z" fill="#a8a8a8" /></Svg>}
        />
        <Area
          title="Columns"
          field="attending"
          icon={<Svg w={16} h={12}><path d="M2.500 1v10M8 1v10M13.500 1v10" stroke="#b8b8b8" strokeWidth="2.500" /></Svg>}
        />
        <Area
          title="Rows"
          field="university"
          icon={<Svg w={16} h={14}><path d="M3 2h10M3 7h10M3 12h10" stroke="#b8b8b8" strokeWidth="2.800" /></Svg>}
        />
        <Area
          title="Values"
          field="Count of student"
          icon={<Svg w={16} h={14}><path d="M13.500 4 13 1H2.500l6 6-6 6H13l1-3.500" stroke="#b8b8b8" strokeWidth="1.700" /></Svg>}
        />
      </div>
      <p className="h-[39px] shrink-0 pt-[7px] text-center text-[13px] leading-5 text-[#686868]">Drag fields between areas</p>
    </aside>
  );
}

function StatusBar() {
  return (
    <footer className="flex h-[23px] shrink-0 items-center justify-end border-t border-b border-t-black border-b-[#6a6a6a] bg-linear-to-b from-[#4a4a4a] to-[#3b3b3b]">
      <button aria-label="Normal view" className="flex h-full w-[37px] items-center justify-center bg-[#606060]">
        <Svg w={13} h={13}><path d="M.5.5h12v12H.5zM4.500 0v13M8.500 0v13M0 4.500h13M0 8.500h13" stroke="#f2f2f2" /></Svg>
      </button>
      <button aria-label="Page layout view" className="ml-[10px]">
        <Svg w={14} h={13}><path d="M.5.5h13v12H.5zM3.500 2.500h7v8h-7zM5 4.500h4M5 6.500h4M5 8.500h4" stroke="#f2f2f2" /></Svg>
      </button>
      <button aria-label="Page break preview" className="ml-[22px]">
        <Svg w={14} h={13}><path d="M.5.5h13v12H.5zM5 .5v7.500M9.500.5v7.500M.5 8h9" stroke="#f2f2f2" /></Svg>
      </button>
      <button aria-label="Zoom out" className="ml-[19px]">
        <Svg w={8} h={8}><path d="M0 4h8" stroke="#fff" strokeWidth="1.700" /></Svg>
      </button>
      <input
        type="range"
        aria-label="Zoom"
        min={0}
        max={100}
        defaultValue={56}
        className="ml-2 h-3 w-[98px] appearance-none bg-transparent [&::-webkit-slider-runnable-track]:h-1 [&::-webkit-slider-runnable-track]:rounded-full [&::-webkit-slider-runnable-track]:bg-[#7c7c7c] [&::-webkit-slider-thumb]:-mt-1 [&::-webkit-slider-thumb]:size-3 [&::-webkit-slider-thumb]:appearance-none [&::-webkit-slider-thumb]:rounded-full [&::-webkit-slider-thumb]:bg-[#cccccc]"
      />
      <button aria-label="Zoom in" className="ml-2">
        <Svg w={8} h={8}><path d="M0 4h8M4 0v8" stroke="#fff" strokeWidth="1.700" /></Svg>
      </button>
      <span className="mr-[23px] ml-[17px] w-[32px] text-xs whitespace-nowrap text-[#dedede]">136%</span>
    </footer>
  );
}

function Annotations() {
  return (
    <svg width="1439" height="877" className="pointer-events-none absolute top-0 left-0 z-30" fill="none" stroke="#fb0007" strokeWidth="4" aria-hidden="true">
      <circle cx="546" cy="245.500" r="23" />
      <path d="M537 279C505 342 497 403 588 455" />
      <path d="M580 416 588 452c1 5-1 7-6 6.500L566 457" strokeWidth="4.500" />
      <ellipse cx="1207.500" cy="420" rx="76.500" ry="23.500" />
      <ellipse cx="1357.500" cy="419.500" rx="66" ry="20" />
    </svg>
  );
}

export default function App() {
  return (
    <div className="relative flex h-screen flex-col overflow-hidden bg-[#2b2b2b] font-['Inter',sans-serif]">
      <TitleBar />
      <MenuRow />
      <Ribbon />
      <FormulaBar />
      <div className="h-[3px] shrink-0 border-y border-[#8a8a8a] bg-[#f0f0f0]" />
      <main className="flex min-h-0 flex-1">
        <div className="flex min-w-0 flex-1 flex-col">
          <Sheet />
          <SheetTabs />
        </div>
        <FieldsPanel />
      </main>
      <StatusBar />
      <Annotations />
    </div>
  );
}
